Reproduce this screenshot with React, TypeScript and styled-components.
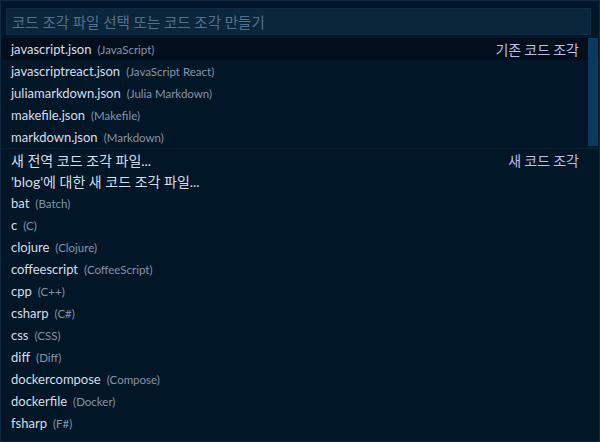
import React from "react";
import styled, { createGlobalStyle } from "styled-components";

const Global = createGlobalStyle`
  html, body { margin: 0; padding: 0; background: #011627; }
  body { font-family: "Lato", "Noto Sans CJK KR", sans-serif; }
`;

const Widget = styled.div`
  width: 600px;
  height: 442px;
  box-sizing: border-box;
  background: #011627;
  border: 1px solid #0f2a40;
  display: flex;
  flex-direction: column;
  overflow: hidden;
`;

const InputWrap = styled.div`
  padding: 7px 8px 3px 5px;
`;

const Input = styled.div`
  height: 27px;
  box-sizing: border-box;
  background: #0b253a;
  border: 1px solid #0f2d46;
  padding: 0 5px;
  display: flex;
  align-items: center;
  color: #52718d;
  font-size: 14.5px;
  font-family: "Lato", "Noto Sans CJK KR", sans-serif;
`;

const ListArea = styled.div`
  position: relative;
  flex: 1;
`;

const Row = styled.div<{ $focused?: boolean; $sep?: boolean }>`
  height: 22px;
  display: flex;
  align-items: center;
  padding: 0 20px 0 10px;
  background: ${(p) => (p.$focused ? "#010f1c" : "transparent")};
  border-top: ${(p) => (p.$sep ? "1px solid #0a2133" : "none")};
  box-sizing: border-box;
`;

const Label = styled.span<{ $ko?: boolean }>`
  color: #d6deeb;
  font-size: ${(p) => (p.$ko ? "14px" : "13px")};
  font-family: "Lato", "Noto Sans CJK KR", sans-serif;
  white-space: nowrap;
`;

const Desc = styled.span`
  color: #8595a9;
  font-size: 11.5px;
  margin-left: 6px;
  white-space: nowrap;
`;

const Group = styled.span`
  margin-left: auto;
  color: #c0bde8;
  font-size: 14px;
  font-family: "Noto Sans CJK KR", sans-serif;
`;

const Scrollbar = styled.div`
  position: absolute;
  top: 0;
  right: 1px;
  width: 10px;
  height: 108px;
  background: #0a3a60;
`;

type Item = { label: string; desc?: string; group?: string; sep?: boolean; ko?: boolean };

const items: Item[] = [
  { label: "javascript.json", desc: "(JavaScript)", group: "기존 코드 조각" },
  { label: "javascriptreact.json", desc: "(JavaScript React)" },
  { label: "juliamarkdown.json", desc: "(Julia Markdown)" },
  { label: "makefile.json", desc: "(Makefile)" },
  { label: "markdown.json", desc: "(Markdown)" },
  { label: "새 전역 코드 조각 파일...", group: "새 코드 조각", sep: true, ko: true },
  { label: "'blog'에 대한 새 코드 조각 파일...", ko: true },
  { label: "bat", desc: "(Batch)" },
  { label: "c", desc: "(C)" },
  { label: "clojure", desc: "(Clojure)" },
  { label: "coffeescript", desc: "(CoffeeScript)" },
  { label: "cpp", desc: "(C++)" },
  { label: "csharp", desc: "(C#)" },
  { label: "css", desc: "(CSS)" },
  { label: "diff", desc: "(Diff)" },
  { label: "dockercompose", desc: "(Compose)" },
  { label: "dockerfile", desc: "(Docker)" },
  { label: "fsharp", desc: "(F#)" },
];

export default function App() {
  return (
    <>
      <Global />
      <Widget>
        <InputWrap>
          <Input>코드 조각 파일 선택 또는 코드 조각 만들기</Input>
        </InputWrap>
        <ListArea>
          {items.map((it, i) => (
            <Row key={i} $focused={i === 0} $sep={it.sep}>
              <Label $ko={it.ko}>{it.label}</Label>
              {it.desc && <Desc>{it.desc}</Desc>}
              {it.group && <Group>{it.group}</Group>}
            </Row>
          ))}
          <Scrollbar />
        </ListArea>
      </Widget>
    </>
  );
}
